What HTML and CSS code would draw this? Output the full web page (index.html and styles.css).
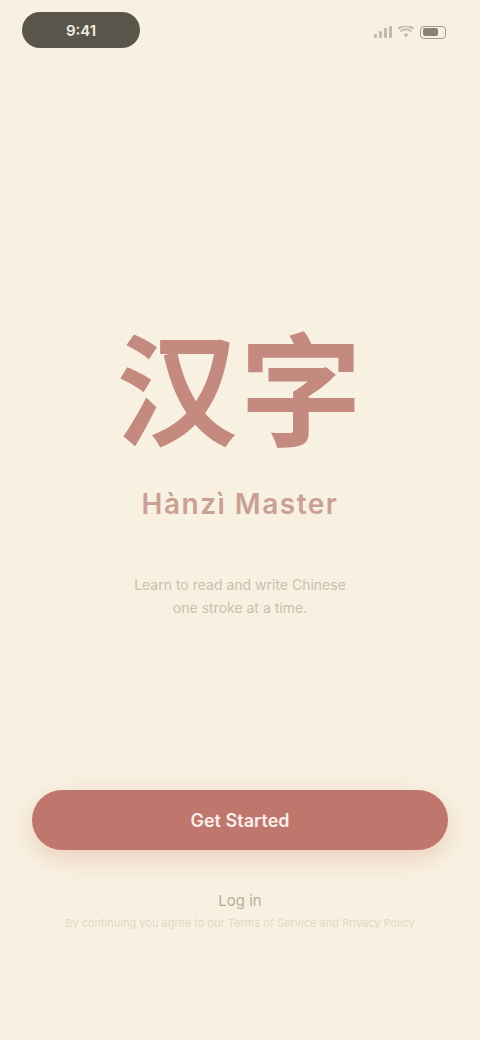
FILE: index.html
```html
<!DOCTYPE html>
<html lang="zh">
<head>
<meta charset="utf-8">
<title>汉字</title>
<link rel="stylesheet" href="styles.css">
</head>
<body>
<div class="screen">
  <header class="status">
    <div class="time-pill">9:41</div>
    <div class="status-icons">
      <svg class="ic" width="18" height="12" viewBox="0 0 18 12"><rect x="0" y="8" width="3" height="4" rx="1" fill="#c2bbad"/><rect x="5" y="5" width="3" height="7" rx="1" fill="#c2bbad"/><rect x="10" y="2" width="3" height="10" rx="1" fill="#c2bbad"/><rect x="15" y="0" width="3" height="12" rx="1" fill="#c2bbad"/></svg>
      <svg class="ic" width="16" height="12" viewBox="0 0 16 12"><path d="M8 11.5 L5.5 8.6 A3.6 3.6 0 0 1 10.5 8.6 Z" fill="#c2bbad"/><path d="M2.6 5.6 A7.6 7.6 0 0 1 13.4 5.6" stroke="#c2bbad" stroke-width="2" fill="none"/><path d="M0.4 3 A11 11 0 0 1 15.6 3" stroke="#c2bbad" stroke-width="2" fill="none"/></svg>
      <div class="battery"><div class="battery-fill"></div></div>
    </div>
  </header>

  <main class="hero">
    <h1 class="logo">汉字</h1>
    <p class="subtitle">Hànzì Master</p>
    <p class="desc">Learn to read and write Chinese<br>one stroke at a time.</p>
  </main>

  <footer class="actions">
    <button class="primary">Get Started</button>
    <a class="login">Log in</a>
    <p class="terms">By continuing you agree to our Terms of Service and Privacy Policy</p>
  </footer>
</div>
</body>
</html>
```
FILE: styles.css
```css
* { box-sizing: border-box; margin: 0; padding: 0; }
html, body { width: 480px; height: 1040px; }
body {
  background: #f8f1e2;
  font-family: "Inter", "Noto Sans", "Noto Sans CJK SC", sans-serif;
  color: #3d3830;
}
.screen {
  height: 1040px;
  display: flex;
  flex-direction: column;
}
.status {
  display: flex;
  justify-content: space-between;
  align-items: center;
  padding: 12px 34px 0 22px;
  height: 48px;
}
.time-pill {
  width: 118px;
  height: 36px;
  border-radius: 18px;
  background: #5a554b;
  color: #f3ede0;
  font-size: 15px;
  font-weight: 600;
  display: flex;
  align-items: center;
  justify-content: center;
}
.status-icons {
  display: flex;
  align-items: center;
  gap: 6px;
  margin-top: 4px;
}
.battery {
  width: 26px;
  height: 13px;
  border: 1.5px solid #a39c8e;
  border-radius: 4px;
  padding: 1.5px;
}
.battery-fill {
  width: 75%;
  height: 100%;
  background: #8a8478;
  border-radius: 2px;
}
.hero {
  flex: 1;
  display: flex;
  flex-direction: column;
  align-items: center;
  padding-top: 265px;
}
.logo {
  font-family: "Noto Sans CJK SC", sans-serif;
  font-weight: 700;
  font-size: 122px;
  line-height: 140px;
  color: #c48a80;
  letter-spacing: 2px;
}
.subtitle {
  margin-top: 34px;
  font-size: 28px;
  font-weight: 600;
  color: #c9a096;
  letter-spacing: 1.5px;
}
.desc {
  margin-top: 52px;
  font-size: 14px;
  line-height: 23px;
  color: #c9c0ae;
  text-align: center;
}
.actions {
  display: flex;
  flex-direction: column;
  align-items: center;
  padding: 0 32px 110px;
}
.primary {
  width: 100%;
  height: 60px;
  border: none;
  border-radius: 30px;
  background: #bf766d;
  color: #fbeee8;
  font-family: inherit;
  font-size: 18px;
  font-weight: 600;
  box-shadow: 0 8px 24px rgba(214, 140, 120, 0.35);
}
.login {
  margin-top: 41px;
  font-size: 15px;
  color: #b8ad9c;
}
.terms {
  margin-top: 6px;
  font-size: 11px;
  color: #e2d8c6;
  text-align: center;
}
```
